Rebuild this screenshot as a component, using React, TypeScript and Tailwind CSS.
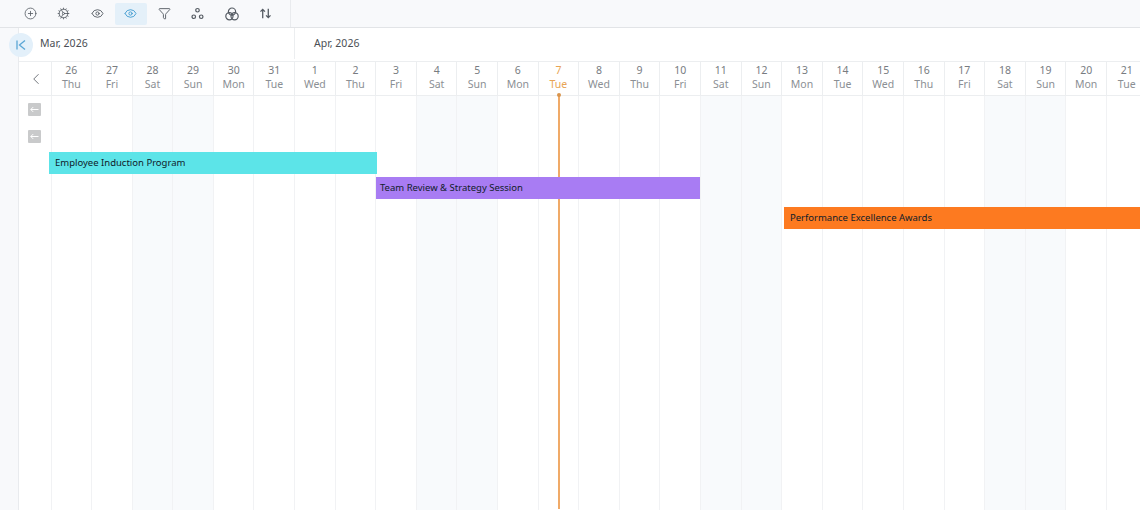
import { ChevronLeft, CirclePlus, Cog, Eye, Funnel } from "lucide-react";

const START_WEEKDAYS = ["Thu", "Fri", "Sat", "Sun", "Mon", "Tue", "Wed"];

const days = Array.from({ length: 27 }, (_, i) => {
  const day = i < 6 ? 26 + i : i - 5;
  const name = START_WEEKDAYS[i % 7];
  return {
    day,
    name,
    weekend: name === "Sat" || name === "Sun",
    today: i === 12,
  };
});

function Triple() {
  return (
    <svg viewBox="0 0 14 14" className="size-[13px]" fill="none" stroke="currentColor" strokeWidth="1.3">
      <circle cx="7" cy="3.5" r="1.9" />
      <circle cx="3" cy="10.5" r="1.9" />
      <circle cx="11" cy="10.5" r="1.9" />
    </svg>
  );
}

function Overlap() {
  return (
    <svg viewBox="0 0 14 14" className="size-[14px]" fill="none" stroke="currentColor" strokeWidth="1.2">
      <circle cx="7" cy="4.6" r="3.6" />
      <circle cx="4.4" cy="9.2" r="3.6" />
      <circle cx="9.6" cy="9.2" r="3.6" />
    </svg>
  );
}

function UpDown() {
  return (
    <svg viewBox="0 0 14 14" className="size-[13px]" fill="none" stroke="currentColor" strokeWidth="1.4">
      <path d="M4 12V2.5M1.6 5 4 2.5 6.4 5" />
      <path d="M10 2v9.5M7.6 9 10 11.5 12.4 9" />
    </svg>
  );
}

function ToolButton({ children, active }: { children: React.ReactNode; active?: boolean }) {
  return (
    <div
      className={
        active
          ? "flex h-[22px] w-[32px] items-center justify-center rounded-[2px] bg-[#e4f0f9] text-[#3f9bd0]"
          : "flex h-[22px] w-[32px] items-center justify-center text-[#555b63]"
      }
    >
      {children}
    </div>
  );
}

function BackButton() {
  return (
    <div className="flex size-[13px] items-center justify-center rounded-[1px] bg-[#c9cacb] text-white">
      <svg viewBox="0 0 13 13" className="size-[13px]" fill="none" stroke="currentColor" strokeWidth="1">
        <path d="M10.5 6.5H2.8M5.2 4.1 2.8 6.5l2.4 2.4" />
      </svg>
    </div>
  );
}

function Bar({ className, label }: { className: string; label: string }) {
  return (
    <div className={`absolute flex h-[22px] items-center text-[9.5px] text-[#10202a] ${className}`}>
      {label}
    </div>
  );
}

export default function App() {
  return (
    <div className="relative h-[524px] w-[1140px] overflow-hidden bg-white font-['Noto_Sans',sans-serif]">
      <div className="flex h-[28px] border-b border-[#e2e4e7] bg-[#f8f9fb]">
        <div className="flex w-[291px] items-center gap-[1.6px] border-r border-[#e9ebee] pl-[14px]">
          <ToolButton><CirclePlus className="size-[13px]" strokeWidth={1.5} /></ToolButton>
          <ToolButton><Cog className="size-[13px]" strokeWidth={1.5} /></ToolButton>
          <ToolButton><Eye className="size-[13px]" strokeWidth={1.7} /></ToolButton>
          <ToolButton active><Eye className="size-[13px]" strokeWidth={1.7} /></ToolButton>
          <ToolButton><Funnel className="size-[13px]" strokeWidth={1.7} /></ToolButton>
          <ToolButton><Triple /></ToolButton>
          <ToolButton><Overlap /></ToolButton>
          <ToolButton><UpDown /></ToolButton>
        </div>
      </div>

      <div className="flex">
        <div className="h-[482px] w-[19px] shrink-0 border-r border-[#e9ebee] bg-[#f8f9fb]" />

        <div className="min-w-0 flex-1">
          <div className="flex h-[34px] border-b border-[#eceef0] pb-[2px] text-[10.5px] text-[#4b4f55]">
            <div className="flex w-[276px] shrink-0 items-center border-r border-[#eceef0] pl-[21px]">Mar, 2026</div>
            <div className="flex items-center pl-[19px]">Apr, 2026</div>
          </div>

          <div className="flex">
            <div className="w-[31.5px] shrink-0">
              <div className="flex h-[34px] items-center justify-center border-b border-[#eceef0] pl-[3px] text-[#6f7379]">
                <ChevronLeft className="size-[18px]" strokeWidth={1.3} />
              </div>
              <div className="flex flex-col items-center gap-[14px] pt-[7px]">
                <BackButton />
                <BackButton />
              </div>
            </div>

            {days.map((d) => (
              <div key={d.day + d.name} className="w-[40.6px] shrink-0">
                <div
                  className={`flex h-[34px] flex-col items-center justify-center border-b border-l border-[#eceef0] pb-[3px] text-[10.5px] leading-[14px] ${
                    d.today ? "text-[#e8a454]" : "text-[#8b8f94]"
                  }`}
                >
                  <span className={d.today ? "" : "text-[#787c81]"}>{d.day}</span>
                  <span>{d.name}</span>
                </div>
                <div className={`h-[414px] border-l border-[#f1f2f4] ${d.weekend ? "bg-[#f8fafc]" : "bg-white"}`} />
              </div>
            ))}
          </div>
        </div>
      </div>

      <div className="absolute left-[9px] top-[33px] flex size-[24px] items-center justify-center rounded-full bg-[#e3f0fa] text-[#5aa6d6]">
        <svg viewBox="0 0 12 12" className="size-[12px]" fill="none" stroke="currentColor" strokeWidth="1.3">
          <path d="M2 1.5v9M10 1.5 4.5 6l5.5 4.5" />
        </svg>
      </div>

      <div className="absolute left-[558px] top-[95px] h-[414px] w-[1.5px] bg-[#f0aa68]" />
      <div className="absolute left-[557px] top-[93px] size-[3.5px] rounded-full bg-[#d9944c]" />

      <Bar className="left-[49px] top-[152px] w-[328px] bg-[#5ce4e8] pl-[6px]" label="Employee Induction Program" />
      <Bar className="left-[376px] top-[177px] w-[324px] bg-[#a87cf3] pl-[4px]" label="Team Review & Strategy Session" />
      <Bar className="left-[784px] top-[207px] w-[356px] bg-[#fd7a20] pl-[6px]" label="Performance Excellence Awards" />
    </div>
  );
}
